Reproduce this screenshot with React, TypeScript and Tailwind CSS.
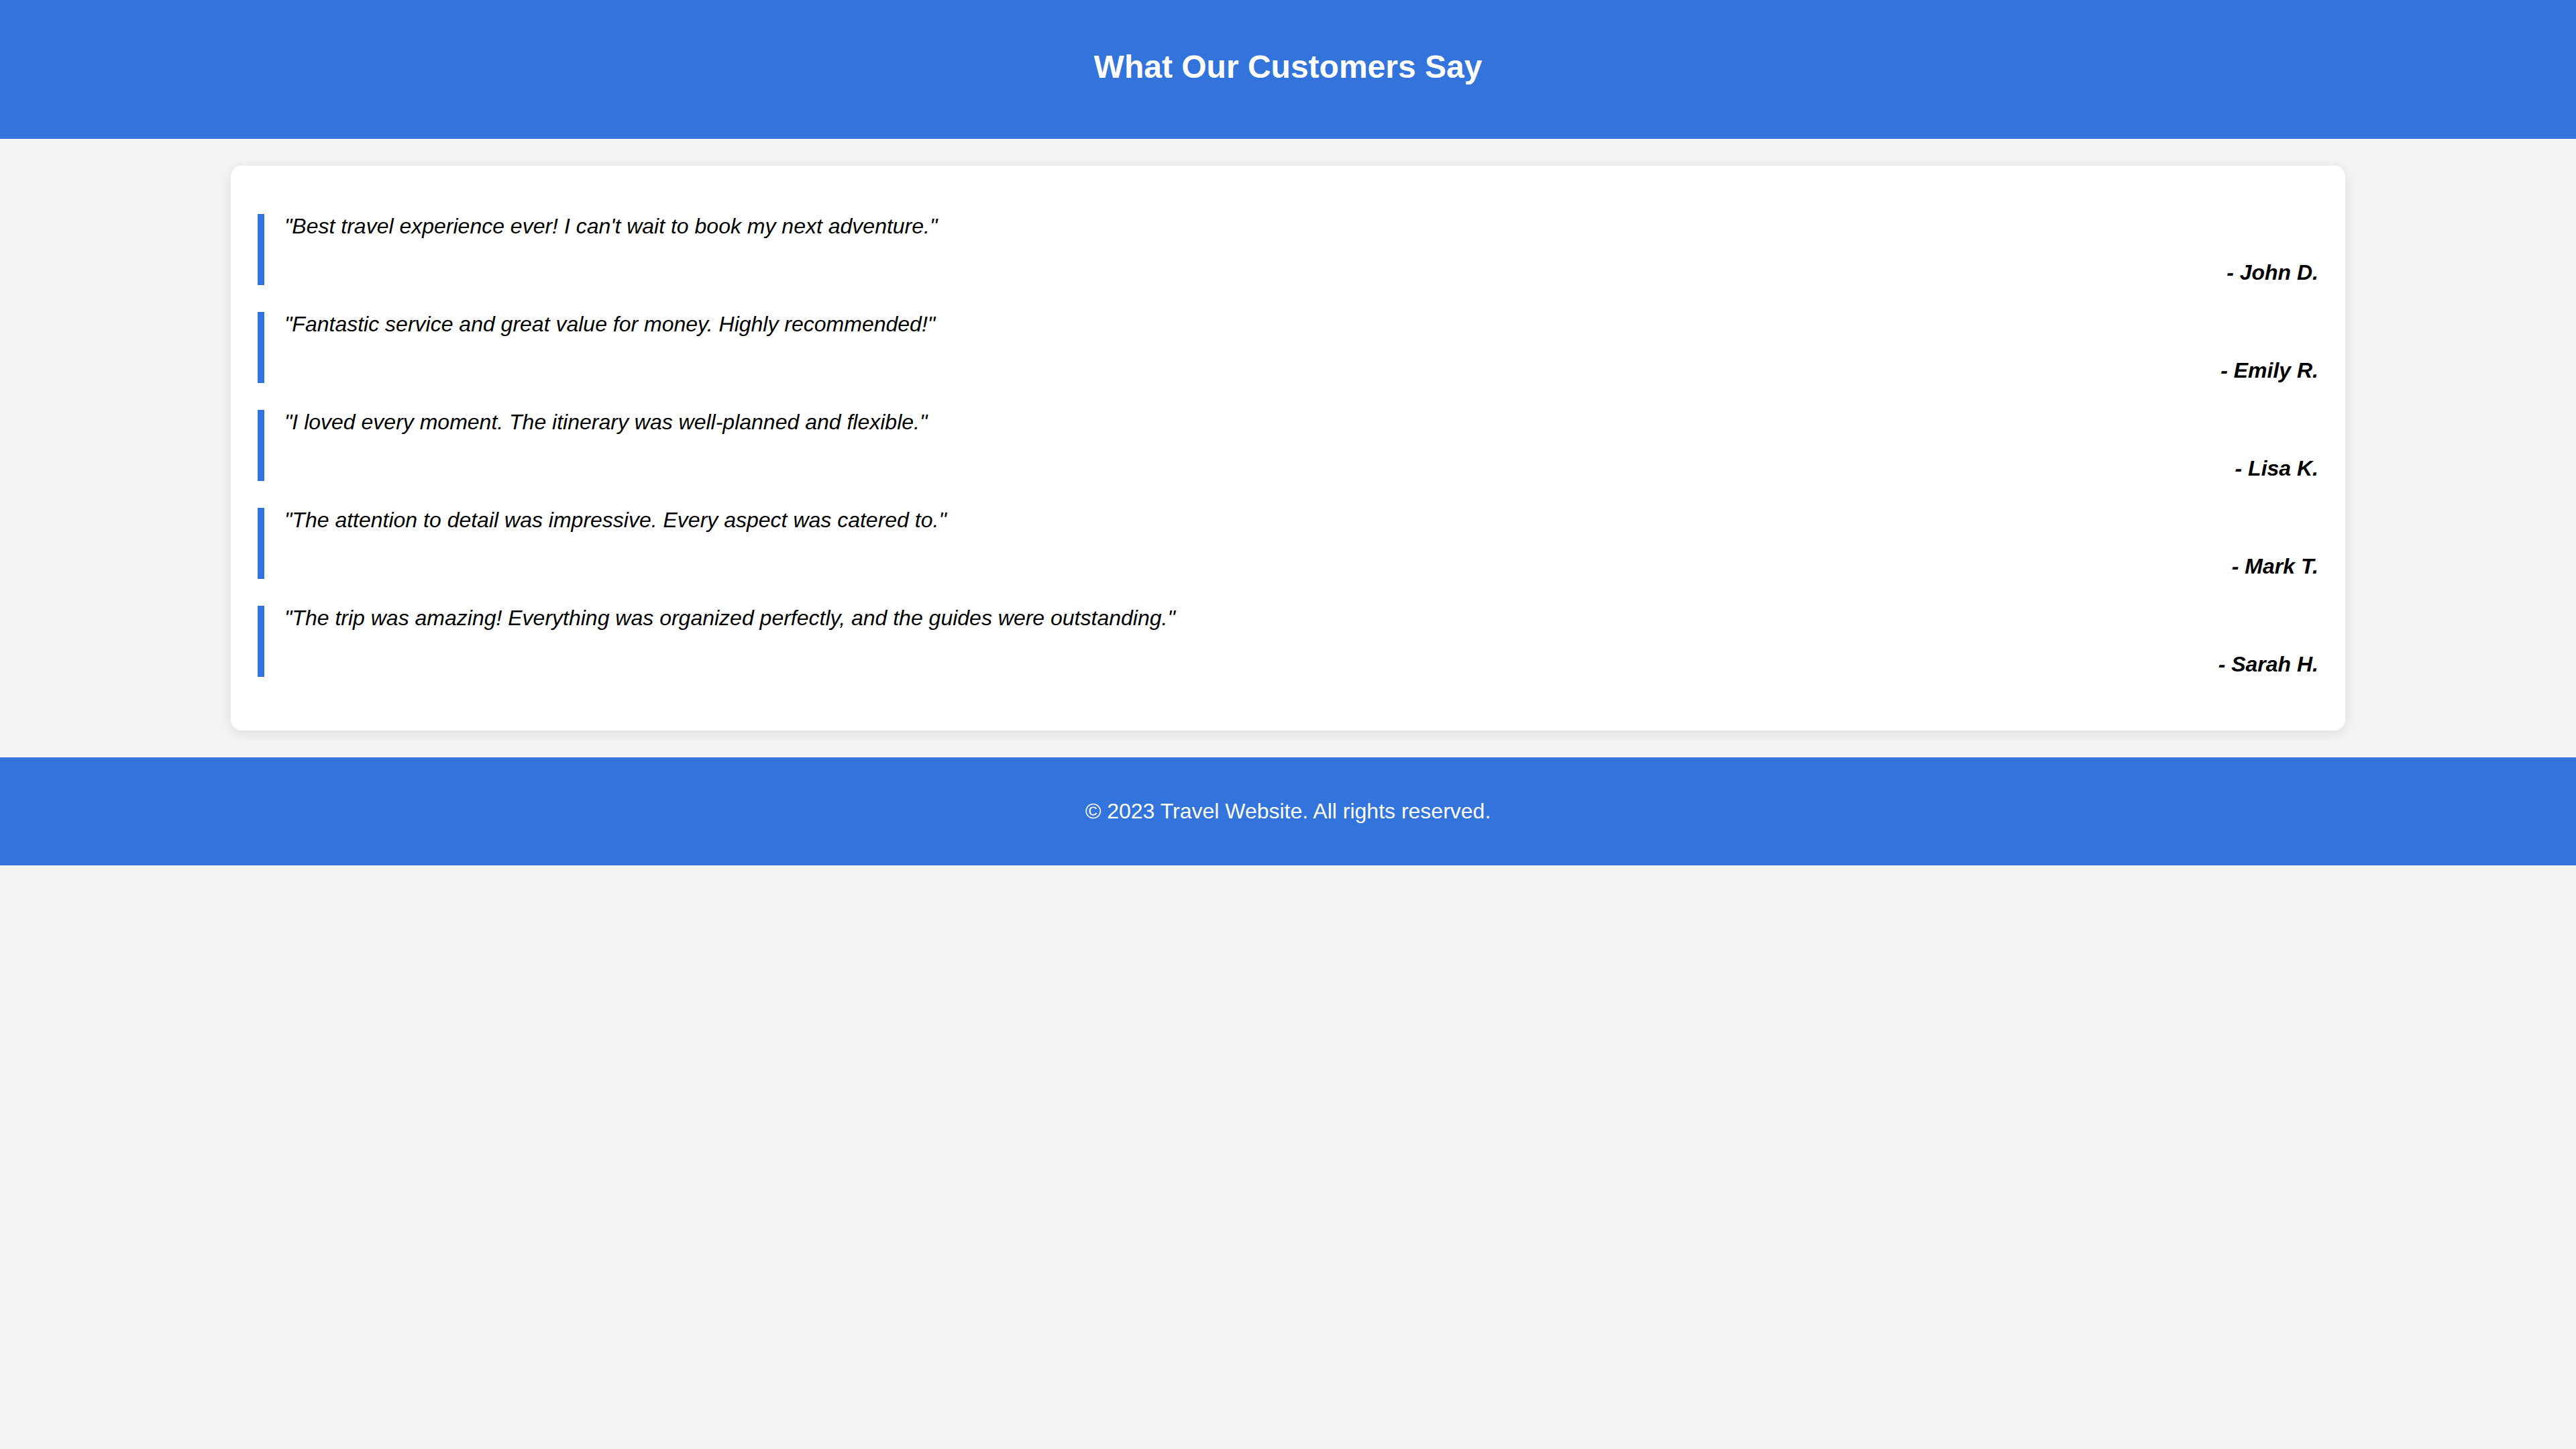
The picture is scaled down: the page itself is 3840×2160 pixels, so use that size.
const testimonials = [
  { quote: 'Best travel experience ever! I can\'t wait to book my next adventure.', author: 'John D.' },
  { quote: 'Fantastic service and great value for money. Highly recommended!', author: 'Emily R.' },
  { quote: 'I loved every moment. The itinerary was well-planned and flexible.', author: 'Lisa K.' },
  { quote: 'The attention to detail was impressive. Every aspect was catered to.', author: 'Mark T.' },
  { quote: 'The trip was amazing! Everything was organized perfectly, and the guides were outstanding.', author: 'Sarah H.' },
]

export default function App() {
  return (
    <div className="min-h-screen bg-[#f4f4f4] font-['Liberation_Sans',Arial,sans-serif] text-black">
      <header className="h-[207px] bg-[#3273dc] pt-[72px] text-center">
        <h1 className="text-[48px] font-bold leading-[55px] text-white">What Our Customers Say</h1>
      </header>

      <main className="py-[40px]">
        <section className="mx-[344px] rounded-[16px] bg-white px-[40px] pt-[72px] pb-[80px] shadow-[0_4px_20px_rgba(0,0,0,0.1)]">
          <div className="flex flex-col gap-[40px]">
            {testimonials.map((t) => (
              <blockquote key={t.author} className="border-l-[10px] border-[#3273dc] pl-[30px]">
                <p className="text-[32px] italic leading-[37px]">"{t.quote}"</p>
                <p className="mt-[32px] text-right text-[32px] font-bold italic leading-[37px]">- {t.author}</p>
              </blockquote>
            ))}
          </div>
        </section>
      </main>

      <footer className="flex h-[161px] items-center justify-center bg-[#3273dc]">
        <p className="text-[32px] leading-[37px] text-white">© 2023 Travel Website. All rights reserved.</p>
      </footer>
    </div>
  )
}
